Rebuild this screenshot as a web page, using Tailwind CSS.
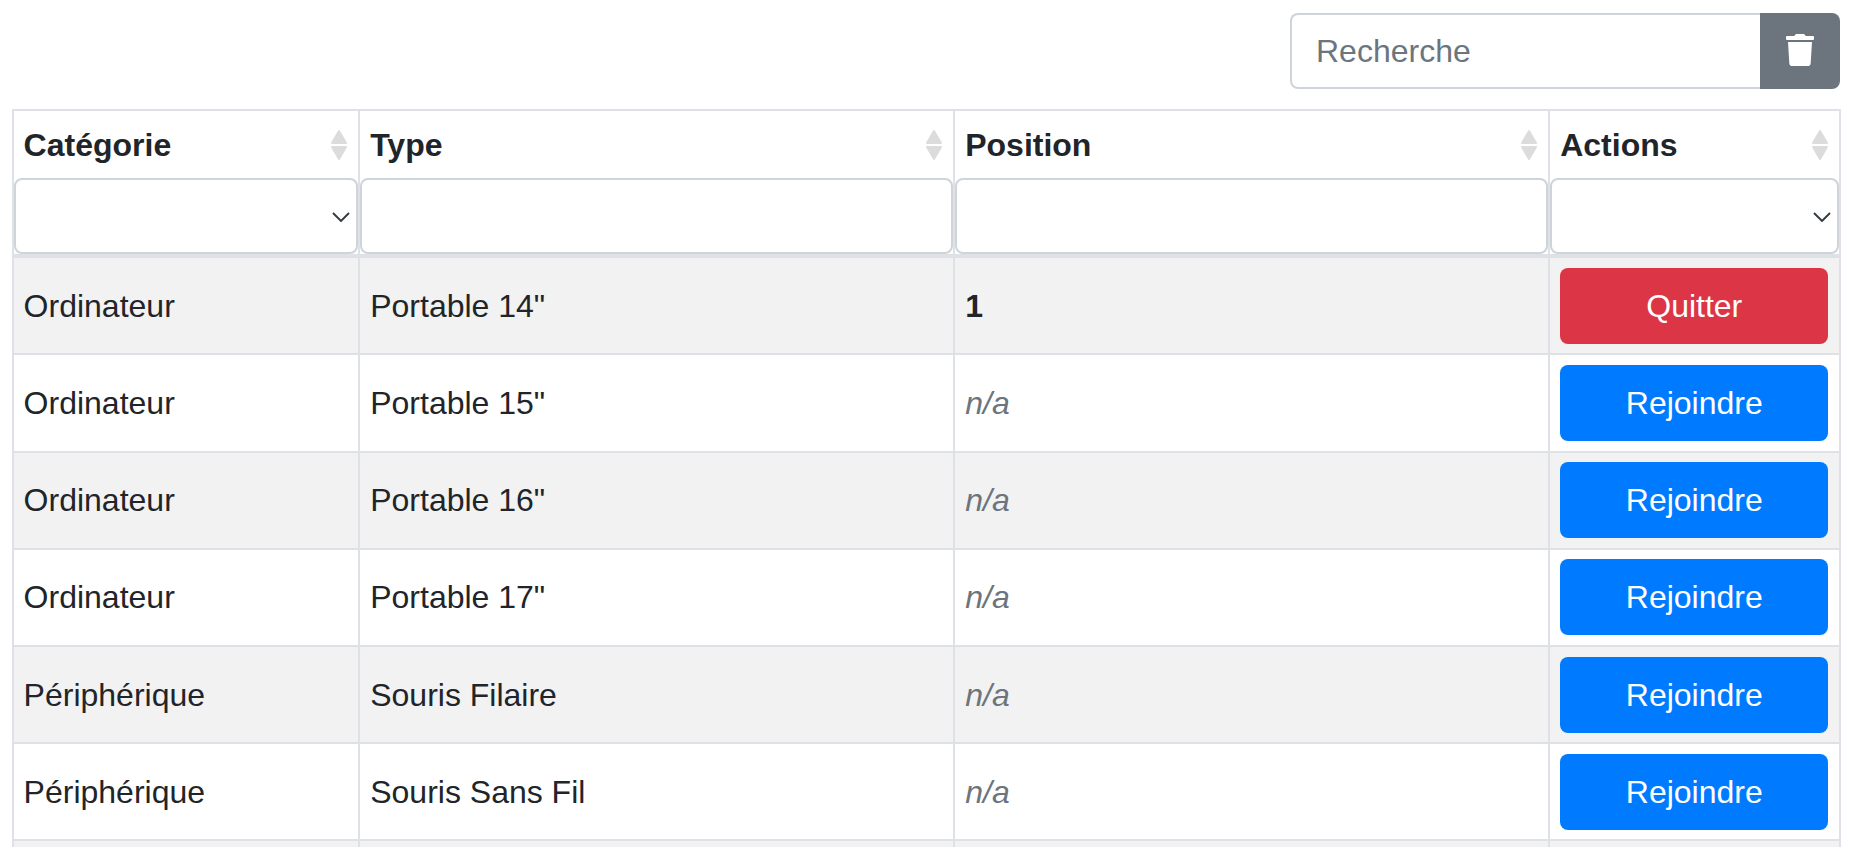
<!doctype html>
<html lang="fr">
<head>
  <meta charset="utf-8"/>
  <meta content="width=device-width, initial-scale=1.0" name="viewport"/>
  <title>Files d'attente</title>
  <script src="https://cdn.jsdelivr.net/npm/@tailwindcss/browser@4"></script>
</head>
<body class="h-[847px] overflow-hidden bg-white pt-[13px] pr-[10px] pl-[12px] font-['Liberation_Sans',Arial,sans-serif] text-[32px] leading-[48px] text-[#212529]">
  <div class="flex justify-end">
    <div class="flex h-[76px] w-[550px]">
      <input class="min-w-0 flex-1 rounded-l-[8px] border-2 border-r-0 border-[#ced4da] bg-white px-[24px] text-[#495057] placeholder:text-[#6c757d]" placeholder="Recherche" type="text"/>
      <button class="flex w-[80px] items-center justify-center rounded-r-[8px] bg-[#6c757d]">
        <svg class="mb-[3px] h-[32px] w-[28px] fill-white" viewBox="0 0 448 512"><path d="M432 32H312l-9.4-18.7A24 24 0 0 0 281.1 0H166.8a23.72 23.72 0 0 0-21.4 13.3L136 32H16A16 16 0 0 0 0 48v32a16 16 0 0 0 16 16h416a16 16 0 0 0 16-16V48a16 16 0 0 0-16-16zM53.2 467a48 48 0 0 0 47.9 45h245.8a48 48 0 0 0 47.9-45L416 128H32z"/></svg>
      </button>
    </div>
  </div>

  <table class="mt-[20.2px] w-[1826.5px] table-fixed border-collapse">
    <colgroup>
      <col class="w-[346px]"/>
      <col class="w-[595px]"/>
      <col class="w-[595px]"/>
      <col class="w-[290.5px]"/>
    </colgroup>
    <thead>
      <tr class="h-[68px] text-left">
        <th class="relative border-x-2 border-t-2 border-[#dee2e6] px-[9.6px] font-bold">
          Catégorie
          <svg class="absolute top-[18px] right-[10px] h-[32px] w-[18px] fill-[#dcdcdc] stroke-[#dcdcdc]" viewBox="0 0 18 32"><path d="M9 2 16 14H2zM2 18H16L9 30z" stroke-width="2" stroke-linejoin="round"/></svg>
        </th>
        <th class="relative border-x-2 border-t-2 border-[#dee2e6] px-[10.2px] font-bold">
          Type
          <svg class="absolute top-[18px] right-[10px] h-[32px] w-[18px] fill-[#dcdcdc] stroke-[#dcdcdc]" viewBox="0 0 18 32"><path d="M9 2 16 14H2zM2 18H16L9 30z" stroke-width="2" stroke-linejoin="round"/></svg>
        </th>
        <th class="relative border-x-2 border-t-2 border-[#dee2e6] px-[10.2px] font-bold">
          Position
          <svg class="absolute top-[18px] right-[10px] h-[32px] w-[18px] fill-[#dcdcdc] stroke-[#dcdcdc]" viewBox="0 0 18 32"><path d="M9 2 16 14H2zM2 18H16L9 30z" stroke-width="2" stroke-linejoin="round"/></svg>
        </th>
        <th class="relative border-x-2 border-t-2 border-[#dee2e6] px-[10.2px] font-bold">
          Actions
          <svg class="absolute top-[18px] right-[10px] h-[32px] w-[18px] fill-[#dcdcdc] stroke-[#dcdcdc]" viewBox="0 0 18 32"><path d="M9 2 16 14H2zM2 18H16L9 30z" stroke-width="2" stroke-linejoin="round"/></svg>
        </th>
      </tr>
      <tr>
        <td class="border-x-2 border-b-4 border-[#dee2e6] p-0">
          <div class="relative h-[76px] rounded-[8px] border-2 border-[#ced4da] bg-white">
            <svg class="absolute top-[32px] right-[6px] h-[10px] w-[18px] fill-none stroke-[#343a40]" viewBox="0 0 18 10"><path d="M1 1 9 9 17 1" stroke-width="1.9"/></svg>
          </div>
        </td>
        <td class="border-x-2 border-b-4 border-[#dee2e6] p-0"><div class="h-[76px] rounded-[8px] border-2 border-[#ced4da] bg-white"></div></td>
        <td class="border-x-2 border-b-4 border-[#dee2e6] p-0"><div class="h-[76px] rounded-[8px] border-2 border-[#ced4da] bg-white"></div></td>
        <td class="border-x-2 border-b-4 border-[#dee2e6] p-0">
          <div class="relative h-[76px] rounded-[8px] border-2 border-[#ced4da] bg-white">
            <svg class="absolute top-[32px] right-[6px] h-[10px] w-[18px] fill-none stroke-[#343a40]" viewBox="0 0 18 10"><path d="M1 1 9 9 17 1" stroke-width="1.9"/></svg>
          </div>
        </td>
      </tr>
    </thead>
    <tbody>
      <tr class="bg-[#f2f2f2]">
        <td class="border-2 border-[#dee2e6] px-[9.6px] py-[9.6px]">Ordinateur</td>
        <td class="border-2 border-[#dee2e6] px-[10.2px] py-[9.6px]">Portable 14"</td>
        <td class="border-2 border-[#dee2e6] px-[10.2px] py-[9.6px] font-bold">1</td>
        <td class="border-2 border-[#dee2e6] px-[10.2px] py-[9.6px]"><button class="block h-[76px] w-full rounded-[8px] bg-[#dc3545] text-white">Quitter</button></td>
      </tr>
      <tr>
        <td class="border-2 border-[#dee2e6] px-[9.6px] py-[9.6px]">Ordinateur</td>
        <td class="border-2 border-[#dee2e6] px-[10.2px] py-[9.6px]">Portable 15"</td>
        <td class="border-2 border-[#dee2e6] px-[10.2px] py-[9.6px] text-[#6c757d] italic">n/a</td>
        <td class="border-2 border-[#dee2e6] px-[10.2px] py-[9.6px]"><button class="block h-[76px] w-full rounded-[8px] bg-[#007bff] text-white">Rejoindre</button></td>
      </tr>
      <tr class="bg-[#f2f2f2]">
        <td class="border-2 border-[#dee2e6] px-[9.6px] py-[9.6px]">Ordinateur</td>
        <td class="border-2 border-[#dee2e6] px-[10.2px] py-[9.6px]">Portable 16"</td>
        <td class="border-2 border-[#dee2e6] px-[10.2px] py-[9.6px] text-[#6c757d] italic">n/a</td>
        <td class="border-2 border-[#dee2e6] px-[10.2px] py-[9.6px]"><button class="block h-[76px] w-full rounded-[8px] bg-[#007bff] text-white">Rejoindre</button></td>
      </tr>
      <tr>
        <td class="border-2 border-[#dee2e6] px-[9.6px] py-[9.6px]">Ordinateur</td>
        <td class="border-2 border-[#dee2e6] px-[10.2px] py-[9.6px]">Portable 17"</td>
        <td class="border-2 border-[#dee2e6] px-[10.2px] py-[9.6px] text-[#6c757d] italic">n/a</td>
        <td class="border-2 border-[#dee2e6] px-[10.2px] py-[9.6px]"><button class="block h-[76px] w-full rounded-[8px] bg-[#007bff] text-white">Rejoindre</button></td>
      </tr>
      <tr class="bg-[#f2f2f2]">
        <td class="border-2 border-[#dee2e6] px-[9.6px] py-[9.6px]">Périphérique</td>
        <td class="border-2 border-[#dee2e6] px-[10.2px] py-[9.6px]">Souris Filaire</td>
        <td class="border-2 border-[#dee2e6] px-[10.2px] py-[9.6px] text-[#6c757d] italic">n/a</td>
        <td class="border-2 border-[#dee2e6] px-[10.2px] py-[9.6px]"><button class="block h-[76px] w-full rounded-[8px] bg-[#007bff] text-white">Rejoindre</button></td>
      </tr>
      <tr>
        <td class="border-2 border-[#dee2e6] px-[9.6px] py-[9.6px]">Périphérique</td>
        <td class="border-2 border-[#dee2e6] px-[10.2px] py-[9.6px]">Souris Sans Fil</td>
        <td class="border-2 border-[#dee2e6] px-[10.2px] py-[9.6px] text-[#6c757d] italic">n/a</td>
        <td class="border-2 border-[#dee2e6] px-[10.2px] py-[9.6px]"><button class="block h-[76px] w-full rounded-[8px] bg-[#007bff] text-white">Rejoindre</button></td>
      </tr>
      <tr class="h-[97px] bg-[#f2f2f2]">
        <td class="border-2 border-[#dee2e6]"></td>
        <td class="border-2 border-[#dee2e6]"></td>
        <td class="border-2 border-[#dee2e6]"></td>
        <td class="border-2 border-[#dee2e6]"></td>
      </tr>
    </tbody>
  </table>
</body>
</html>
